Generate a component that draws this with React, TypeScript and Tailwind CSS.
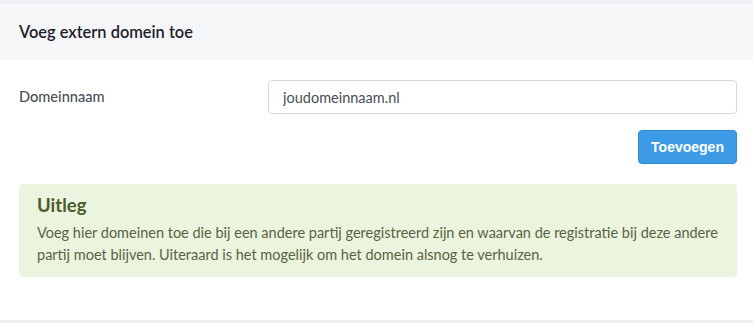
import { useState } from 'react';

export default function App() {
  const [domain, setDomain] = useState('');

  return (
    <div className="min-h-[323px] bg-[#eef0f4] pt-[4px] pb-[3px] font-['Lato','Noto_Sans',sans-serif]">
      <div className="bg-white h-[316px] flex flex-col">
        {/* Kop */}
        <div className="h-[56px] bg-[#f5f6f8] px-[19px] flex items-center">
          <h2 className="text-[16.4px] font-semibold text-[#1d2127]">Voeg extern domein toe</h2>
        </div>

        {/* Formulier */}
        <div className="pl-[19px] pr-[16px] pt-[20px]">
          <div className="flex items-center">
            <label className="w-[249px] text-[14.6px] font-medium text-[#4a4f57]">Domeinnaam</label>
            <input
              value={domain}
              onChange={(e) => setDomain(e.target.value)}
              placeholder="joudomeinnaam.nl"
              className="flex-1 h-[34px] rounded-[4px] border border-[#d5d9e2] px-[14px] text-[14.5px] text-[#4a4f57] placeholder:text-[#4a4f57] outline-none"
            />
          </div>

          <div className="flex justify-end mt-[16px]">
            <button className="h-[34px] w-[99px] rounded-[4px] bg-[#3d9be6] border border-[#2f8ad6] text-white text-[14px] font-bold font-['Liberation_Sans',sans-serif]">
              Toevoegen
            </button>
          </div>

          {/* Uitleg */}
          <div className="mt-[20px] bg-[#eaf4df] rounded-[4px] pl-[18px] pr-[12px] pt-[8px] pb-[11px]">
            <h3 className="text-[18.5px] font-bold text-[#4d5c29] leading-[26px]">Uitleg</h3>
            <p className="text-[14.5px] text-[#5b6242] leading-[22px] mt-[4px]">
              Voeg hier domeinen toe die bij een andere partij geregistreerd zijn en waarvan de registratie bij deze andere partij moet blijven. Uiteraard is het mogelijk om het domein alsnog te verhuizen.
            </p>
          </div>
        </div>
      </div>
    </div>
  );
}
